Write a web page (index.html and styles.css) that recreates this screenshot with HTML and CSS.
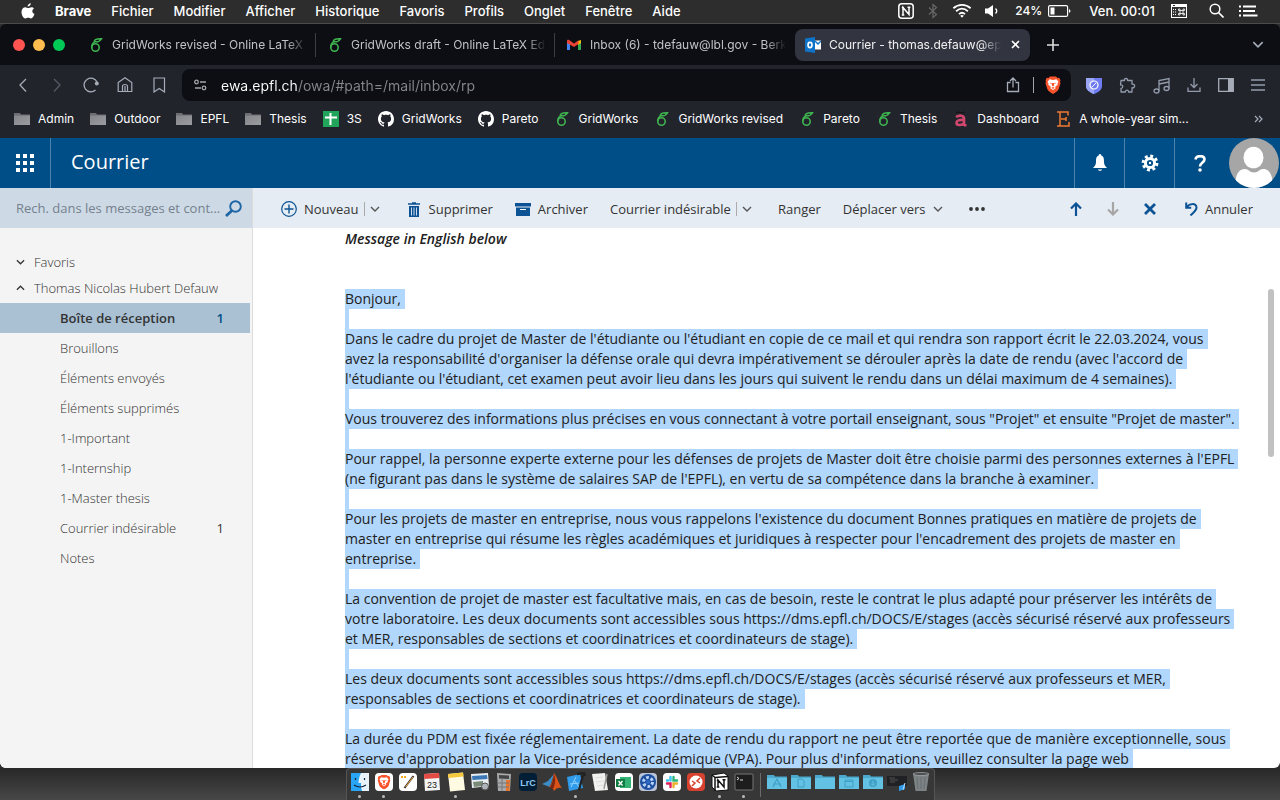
FILE: index.html
```html
<!DOCTYPE html>
<html lang="fr">
<head>
<meta charset="utf-8">
<title>Courrier - thomas.defauw@epfl.ch</title>
<link rel="stylesheet" href="styles.css">
</head>
<body>
<svg class="defs" aria-hidden="true">
  <symbol id="leaf" viewBox="0 0 16 16"><circle cx="7.500" cy="10.500" r="3.700" fill="none" stroke="#3eb34f" stroke-width="1.600"/><path d="M3.800 10.500C3.500 6.500 5.500 5 8.500 4.500M6 4.500C7 2 10 1.500 13.500 1.800 12 4 10 5 7.500 4.800" fill="none" stroke="#3eb34f" stroke-width="1.500"/></symbol>
  <symbol id="folder" viewBox="0 0 16 16"><path d="M0 2h6l1 1.500h9V14H0z" fill="#6c6d72"/><path d="M0 4.500h16V14H0z" fill="url(#fg)"/></symbol>
  <linearGradient id="fg" x1="0" x2="1" y1="0" y2="1"><stop stop-color="#85868b"/><stop offset="1" stop-color="#9b9ca0"/></linearGradient>
  <symbol id="github" viewBox="0 0 16 16"><path fill="#fff" d="M8 0C3.580 0 0 3.580 0 8c0 3.540 2.290 6.530 5.470 7.590.4.070.55-.17.55-.38 0-.19-.01-.82-.01-1.490-2.010.37-2.530-.49-2.690-.94-.09-.23-.48-.94-.82-1.130-.28-.15-.68-.52-.01-.53.63-.01 1.080.58 1.230.82.72 1.210 1.870.87 2.330.66.070-.52.280-.87.510-1.070-1.780-.2-3.640-.89-3.640-3.950 0-.87.310-1.590.820-2.150-.08-.2-.36-1.020.080-2.120 0 0 .67-.21 2.200.820.640-.18 1.320-.27 2-.27s1.360.09 2 .27c1.530-1.040 2.200-.82 2.200-.82.440 1.100.160 1.920.080 2.120.510.560.820 1.270.820 2.150 0 3.070-1.870 3.750-3.650 3.950.290.250.540.730.540 1.480 0 1.070-.01 1.930-.01 2.200 0 .210.150.460.550.380A8.010 8.010 0 0 0 16 8c0-4.420-3.580-8-8-8"/></symbol>
  <symbol id="chev" viewBox="0 0 10 6"><path d="M1 1l4 4 4-4" fill="none" stroke="currentColor" stroke-width="1.400"/></symbol>
  <symbol id="brave" viewBox="0 0 16 18"><path fill="#f9542b" d="M5 .5h6l1.500 1.400 1.700-.1 1.300 2.400-.5 1.500.5 1.500-2 6.300c-.5 1.500-2.500 2.500-5.500 4.500-3-2-5-3-5.500-4.500L.5 7.200 1 5.700.5 4.200l1.300-2.400 1.700.1z"/><path fill="#fff" d="M8 4l3.500-.8L13.500 6l-1 1.200.2 1.500-2.500 2 .4 1.500L8 14l-2.600-1.800.4-1.500-2.500-2 .2-1.500L2.500 6l2-2.800z"/><path d="M4.500 6.500l2.300.7-.5 1zM11.500 6.500l-2.300.7.5 1zM7 7h2l.2 2.500L8 10.500l-1.200-1zM6.300 11.800L8 11l1.700.8L8 13z" fill="#f9542b"/></symbol>
</svg>

<nav class="menubar" aria-label="Barre des menus">
  <svg class="apple" viewBox="0 0 14 16"><path fill="#fff" d="M9.800.2c.1 1.700-1.500 3.500-3.200 3.400C6.400 2 8.100.3 9.800.2zM12.900 5.500c-2.300 1.500-1.900 4.500.6 5.500-.7 2-2 4.500-3.500 4.500-1.100 0-1.500-.7-2.800-.7s-1.700.7-2.800.7C2.500 15.500.5 12 .5 9c0-3 1.900-4.700 3.800-4.700 1.200 0 2.200.8 2.900.8.700 0 1.900-.9 3.300-.9 1 0 1.900.5 2.400 1.300z"/></svg>
  <button class="app">Brave</button><button>Fichier</button><button>Modifier</button><button>Afficher</button><button>Historique</button><button>Favoris</button><button>Profils</button><button>Onglet</button><button>Fenêtre</button><button>Aide</button>
  <div class="status">
    <svg width="16" height="16" viewBox="0 0 16 16"><rect x=".8" y=".8" width="14.400" height="14.400" rx="3" fill="none" stroke="#fff" stroke-width="1.500"/><path d="M5 12V4.500l6 7V4M3.800 4.500H6M3.800 12h2.500M9.500 4.200h2.800" fill="none" stroke="#fff" stroke-width="1.500"/></svg>
    <svg width="12" height="16" viewBox="0 0 12 16"><path d="M2 4.500l7.500 7L6 14.500v-13l3.500 3L2 11.500" fill="none" stroke="#686868" stroke-width="1.200"/></svg>
    <svg width="20" height="15" viewBox="0 0 22 16"><g fill="none" stroke="#fff" stroke-width="2"><path d="M1.500 5.500c5.500-5 13.500-5 19 0M4.500 8.800c4-3.500 9-3.500 13 0M7.700 12c2-1.800 4.600-1.800 6.600 0"/></g><path d="M11 16l-2-2.200c1.200-1 2.800-1 4 0z" fill="#fff"/></svg>
    <svg width="14" height="14" viewBox="0 0 14 14"><path d="M0 4.500h3L8 1v12L3 9.500H0z" fill="#fff"/><path d="M10.500 4.500c1.500 1.500 1.500 3.500 0 5" fill="none" stroke="#fff" stroke-width="1.300"/></svg>
    <span class="charge">24% <svg width="23" height="12" viewBox="0 0 23 12"><rect x=".6" y=".6" width="19" height="10.800" rx="1.500" fill="none" stroke="#fff" stroke-width="1.200"/><path d="M2.500 2.500h4v7h-4zM21 4c2 1 2 3 0 4z" fill="#fff"/></svg></span>
    <span class="clock">Ven. 00:01</span>
    <svg width="16" height="14" viewBox="0 0 16 14"><path d="M0 0h16v14H0z" fill="#fff"/><path d="M1 3h14v10H1z" fill="#333"/><path d="M2 1.500h2" stroke="#333"/><path d="M2 5.500h3M2 8h3M2 10.500h3" stroke="#fff" stroke-dasharray="1 1"/><path d="M9 6.500h3v3H9zM9 6.500H7.500V5H9zM12 6.500h1.500V5H12zM9 9.500H7.500V11H9zM12 9.500h1.500V11H12z" fill="none" stroke="#fff" stroke-width=".8"/></svg>
    <svg width="15" height="15" viewBox="0 0 15 15"><circle cx="6" cy="6" r="4.800" fill="none" stroke="#fff" stroke-width="1.500"/><path d="M9.500 9.500l5 5" stroke="#fff" stroke-width="1.700"/></svg>
    <svg width="19" height="12" viewBox="0 0 19 12"><path d="M0 1.500h2M4 1.500h13M0 6h2M4 6h12M0 10.500h2M4 10.500h14.500" stroke="#fff" stroke-width="2"/></svg>
  </div>
</nav>

<div class="window">
  <div class="tabs">
    <div class="lights"><i></i><i></i><i></i></div>
    <button class="tab"><svg width="16" height="16"><use href="#leaf"/></svg><span class="fade">GridWorks revised - Online LaTeX Editor</span></button>
    <button class="tab"><svg width="16" height="16"><use href="#leaf"/></svg><span class="fade">GridWorks draft - Online LaTeX Editor</span></button>
    <button class="tab last"><svg width="16" height="16" viewBox="0 0 16 16"><path d="M1 5v8h3V7z" fill="#4285f4"/><path d="M15 5v8h-3V7z" fill="#34a853"/><path d="M12 4l3-1v3l-3 2z" fill="#fbbc04"/><path d="M1 6V4c0-1.500 1.500-1.500 2.500-.8L8 6.500l4.500-3.300V7L8 10z" fill="#ea4335"/></svg><span class="fade">Inbox (6) - tdefauw@lbl.gov - Berkeley Lab</span></button>
    <button class="tab active"><svg width="16" height="16" viewBox="0 0 16 16"><path d="M0 1.500L10 0v16L0 14.500z" fill="#0f74c8"/><path d="M10 3.500h6v9h-6z" fill="#fff"/><path d="M10 4l3 3 3-3" fill="none" stroke="#0f74c8" stroke-width="1.500"/><ellipse cx="5" cy="8" rx="2" ry="2.600" fill="none" stroke="#fff" stroke-width="1.600"/></svg><span class="fade">Courrier - thomas.defauw@epfl.ch</span><svg class="close" width="9" height="9" viewBox="0 0 9 9"><path d="M1 1l7 7M8 1L1 8" stroke="#fff" stroke-width="1.600"/></svg></button>
    <button class="plus" aria-label="Nouvel onglet"><svg width="12" height="12" viewBox="0 0 12 12"><path d="M6 0v12M0 6h12" stroke="#ddd" stroke-width="1.600"/></svg></button>
    <button class="more" aria-label="Onglets"><svg width="12" height="7"><use href="#chev"/></svg></button>
  </div>

  <div class="toolbar">
    <div class="navs">
      <button aria-label="Retour"><svg width="16" height="16" viewBox="0 0 16 16"><path d="M11 2L5 8l6 6.500" fill="none" stroke="#a5acb8" stroke-width="1.300"/></svg></button>
      <button aria-label="Avancer"><svg width="16" height="16" viewBox="0 0 16 16"><path d="M5 2l6 6-6 6.500" fill="none" stroke="#555b66" stroke-width="1.300"/></svg></button>
      <button aria-label="Recharger"><svg width="16" height="16" viewBox="0 0 16 16"><path d="M12.500 13A6.800 6.800 0 1 1 14 5" fill="none" stroke="#a5acb8" stroke-width="1.300"/><circle cx="13.800" cy="6.500" r="2" fill="#a5acb8"/></svg></button>
      <button aria-label="Accueil"><svg width="16" height="16" viewBox="0 0 16 16"><path d="M1.200 5.500L8 .8l6.800 4.700v9H1.200zM5.500 14.500V9.500C5.500 6.800 10.500 6.800 10.500 9.500v5M8 9v5.500" fill="none" stroke="#a5acb8" stroke-width="1.200"/></svg></button>
      <button aria-label="Favori"><svg width="16" height="16" viewBox="0 0 16 16"><path d="M3 1h10.500v14L8.200 11.500 3 15z" fill="none" stroke="#a5acb8" stroke-width="1.200"/></svg></button>
    </div>
    <div class="address">
      <svg width="13" height="12" viewBox="0 0 13 12"><g fill="none" stroke="#a3a5a9" stroke-width="1.300"><circle cx="2.500" cy="3" r="1.800"/><path d="M6 3h6M1 9h6"/><circle cx="10" cy="9" r="1.800"/></g></svg>
      <input class="url" aria-label="Adresse" value="ewa.epfl.ch/owa/#path=/mail/inbox/rp">
      <svg width="14" height="16" viewBox="0 0 14 16"><path d="M4.500 5.500H1.500v9h11v-9h-3M7 10.500V1.200M4 4l3-3 3 3" fill="none" stroke="#a5acb8" stroke-width="1.300"/></svg>
      <i class="bar"></i>
      <svg width="16" height="18"><use href="#brave"/></svg>
    </div>
    <div class="tools">
      <svg width="16" height="17" viewBox="0 0 16 17"><path d="M0 1h16v8c0 4-4 6.500-8 8-4-1.500-8-4-8-8z" fill="#6f7df0"/><path d="M0 1h8v16C4 15.500 0 13 0 9z" fill="#9ba5f5"/><circle cx="8" cy="8" r="4" fill="#6f7df0" stroke="#fff" stroke-width="1.200"/><path d="M5.500 10.500l5-5" stroke="#fff"/></svg>
      <svg width="17" height="17" viewBox="0 0 17 17"><path d="M2 3.500h3.500C4.500.8 9.500.8 8.500 3.500H13v3.700c3.500-.8 3.500 4.300 0 3.500V15H9.500c.5-2.500-3.500-2.500-3 0H2v-3.500c2.500-.5 2.500-4-.5-3.500z" fill="none" stroke="#929bab" stroke-width="1.300" stroke-linejoin="round"/></svg>
      <svg width="17" height="17" viewBox="0 0 17 17"><g fill="none" stroke="#929bab" stroke-width="1.300"><ellipse cx="3.500" cy="14" rx="2.500" ry="2"/><ellipse cx="13.500" cy="11.500" rx="2.500" ry="2"/><path d="M6 14V3.500L16 1.500v10M6 7l10-2"/></g></svg>
      <svg width="14" height="14" viewBox="0 0 14 14"><path d="M7 0v9M3.500 6L7 9.500 10.500 6M1 9.500v3.800h12V9.500" fill="none" stroke="#929bab" stroke-width="1.300"/></svg>
      <svg width="16" height="14" viewBox="0 0 16 14"><path d="M.7.7h14.600v12.600H.7z" fill="none" stroke="#a5acb8" stroke-width="1.300"/><path d="M10 1h5v12h-5z" fill="#a5acb8"/></svg>
      <svg width="14" height="12" viewBox="0 0 14 12"><path d="M0 1h14M0 6h14M0 11h14" stroke="#929bab" stroke-width="1.300"/></svg>
    </div>
  </div>

  <div class="bookmarks">
    <a href="#"><svg><use href="#folder"/></svg>Admin</a>
    <a href="#"><svg><use href="#folder"/></svg>Outdoor</a>
    <a href="#"><svg><use href="#folder"/></svg>EPFL</a>
    <a href="#"><svg><use href="#folder"/></svg>Thesis</a>
    <a href="#"><svg viewBox="0 0 16 16"><path d="M0 0h16v16H0z" fill="#20a55b"/><path d="M2 6.500h12M7.500 2v12" stroke="#fff" stroke-width="2"/></svg>3S</a>
    <a href="#"><svg><use href="#github"/></svg>GridWorks</a>
    <a href="#"><svg><use href="#github"/></svg>Pareto</a>
    <a href="#"><svg><use href="#leaf"/></svg>GridWorks</a>
    <a href="#"><svg><use href="#leaf"/></svg>GridWorks revised</a>
    <a href="#"><svg><use href="#leaf"/></svg>Pareto</a>
    <a href="#"><svg><use href="#leaf"/></svg>Thesis</a>
    <a href="#"><svg viewBox="0 0 16 16"><path d="M3 6c3-2 8-2 8 1.500V15M11 9C6 8.500 3.500 9.500 3.500 12s5 3 7.500 0M11 14.200h2.500" fill="none" stroke="#d3476f" stroke-width="2.600"/><path d="M3 1.500q2-1 4 0t5-.5" fill="none" stroke="#111"/></svg>Dashboard</a>
    <a href="#"><svg viewBox="0 0 16 16"><path d="M2 1h11v3.500M2 15h12v-4M5 1v14M6 8h5M11 6v4" fill="none" stroke="#ee7a30" stroke-width="1.500"/></svg>A whole-year sim...</a>
    <button aria-label="Autres favoris"><svg viewBox="0 0 10 8"><path d="M1 1l3 3-3 3M5 1l3 3-3 3" fill="none" stroke="#a5acb8" stroke-width="1.200"/></svg></button>
  </div>

  <header class="owa">
    <button class="cell waffle" aria-label="Applications"><svg width="18" height="18" viewBox="0 0 18 18"><path d="M0 2h18M0 9h18M0 16h18" stroke="#fff" stroke-width="4" stroke-dasharray="4 3"/></svg></button>
    <h1>Courrier</h1>
    <button class="cell" aria-label="Notifications"><svg width="14" height="18" viewBox="0 0 14 18"><path d="M7 0c1 0 1.300 1 1.300 1.500C11 2.500 11 5 11 8c0 3 1.500 4.500 3 6H0c1.500-1.500 3-3 3-6 0-3 0-5.500 2.700-6.500C5.700 1 6 0 7 0z" fill="#fff"/><path d="M5 15.200h4c0 2.500-4 2.500-4 0z" fill="#bcd"/></svg></button>
    <button class="cell" aria-label="Paramètres"><svg width="18" height="18" viewBox="0 0 18 18"><circle cx="9" cy="9" r="6.900" fill="none" stroke="#fff" stroke-width="3" stroke-dasharray="2.900 2.519"/><circle cx="9" cy="9" r="4.600" fill="none" stroke="#fff" stroke-width="3"/><circle cx="9" cy="9" r="1.200" fill="#fff"/></svg></button>
    <button class="cell" aria-label="Aide"><svg width="12" height="17" viewBox="0 0 12 17"><path d="M1.500 4.500C2 0 10.500 0 10.500 4.500 10.500 7.500 6 7.500 6 11.500" fill="none" stroke="#fff" stroke-width="2.600"/><circle cx="6" cy="15" r="1.800" fill="#fff"/></svg></button>
    <button class="avatar" aria-label="Compte"><svg width="50" height="50" viewBox="0 0 50 50"><clipPath id="ac"><circle cx="25" cy="25" r="25"/></clipPath><g clip-path="url(#ac)"><path d="M0 0h50v50H0z" fill="#a6a6a6"/><path d="M6 50c0-14 4-19 10-19 3 0 5 3.500 9 3.500s6-3.500 9-3.500c6 0 10 5 10 19z" fill="#fff"/><ellipse cx="24.500" cy="19.500" rx="10" ry="10.800" fill="#fff"/></g></svg></button>
  </header>

  <div class="mail">
    <aside>
      <label class="search"><input type="text" aria-label="Rechercher" placeholder="Rech. dans les messages et cont..."><svg width="17" height="17" viewBox="0 0 17 17"><circle cx="10.500" cy="6.500" r="5.300" fill="none" stroke="#1d65a5" stroke-width="1.900"/><path d="M7 10.500l-6 5.500" stroke="#1d65a5" stroke-width="2.800"/></svg></label>
      <nav class="folders">
        <button class="group"><svg><use href="#chev"/></svg><span>Favoris</span></button>
        <button class="group"><svg class="up"><use href="#chev"/></svg><span>Thomas Nicolas Hubert Defauw</span></button>
        <a class="on" href="#">Boîte de réception<b>1</b></a>
        <a href="#">Brouillons</a>
        <a href="#">Éléments envoyés</a>
        <a href="#">Éléments supprimés</a>
        <a href="#">1-Important</a>
        <a href="#">1-Internship</a>
        <a href="#">1-Master thesis</a>
        <a href="#">Courrier indésirable<b>1</b></a>
        <a href="#">Notes</a>
      </nav>
    </aside>
    <main>
      <div class="commands">
        <button><svg width="16" height="16" viewBox="0 0 16 16"><circle cx="8" cy="8" r="7.300" fill="none" stroke="#0b5394" stroke-width="1.200"/><path d="M8 3.500v9M3.500 8h9" stroke="#0b5394" stroke-width="1.400"/></svg>Nouveau<span class="split"><svg width="10" height="6"><use href="#chev"/></svg></span></button>
        <button><svg width="16" height="15" viewBox="0 0 12 15"><path d="M0 2h12M4 1h4" stroke="#0b5394" stroke-width="1.600"/><path d="M1 4h10v11H1z" fill="#0b5394"/><path d="M3.500 5.500v8M6 5.500v8M8.500 5.500v8" stroke="#e6ecf3" stroke-width=".9"/></svg>Supprimer</button>
        <button><svg width="16" height="13" viewBox="0 0 16 13"><path d="M0 0h16v3.500H0zM1 4.500h14V13H1z" fill="#0b5394"/><path d="M5 6.500h6" stroke="#fff" stroke-width="1.200"/></svg>Archiver</button>
        <button>Courrier indésirable<span class="split"><svg width="10" height="6"><use href="#chev"/></svg></span></button>
        <button>Ranger</button>
        <button>Déplacer vers<svg class="drop" width="10" height="6"><use href="#chev"/></svg></button>
        <button aria-label="Plus"><svg width="16" height="4" viewBox="0 0 16 4"><circle cx="2" cy="2" r="1.900" fill="#333"/><circle cx="8" cy="2" r="1.900" fill="#333"/><circle cx="14" cy="2" r="1.900" fill="#333"/></svg></button>
        <div class="right">
          <button aria-label="Précédent"><svg width="12" height="14" viewBox="0 0 12 14"><path d="M6 14V2M1 6.500l5-5 5 5" fill="none" stroke="#0b5394" stroke-width="2.200"/></svg></button>
          <button aria-label="Suivant"><svg width="12" height="14" viewBox="0 0 12 14"><path d="M6 0v12M1 7.500l5 5 5-5" fill="none" stroke="#a6a6a6" stroke-width="2.200"/></svg></button>
          <button aria-label="Fermer"><svg width="12" height="12" viewBox="0 0 12 12"><path d="M1 1l10 10M11 1L1 11" stroke="#0b5394" stroke-width="2.800"/></svg></button>
          <button class="undo"><svg width="13" height="14" viewBox="0 0 13 14"><path d="M1.200.5v5.300h5M1.500 5.500C4 1.500 11.500.5 11.500 5.500c0 3-3 5-6 8" fill="none" stroke="#0b5394" stroke-width="2"/></svg>Annuler</button>
        </div>
      </div>
      <article>
        <p class="intro">Message in English below</p>
        <div class="selected">
          <p><span>Bonjour,</span></p>
          <p><span>Dans le cadre du projet de Master de l'étudiante ou l'étudiant en copie de ce mail et qui rendra son rapport écrit le 22.03.2024, vous</span><span>avez la responsabilité d'organiser la défense orale qui devra impérativement se dérouler après la date de rendu (avec l'accord de</span><span>l'étudiante ou l'étudiant, cet examen peut avoir lieu dans les jours qui suivent le rendu dans un délai maximum de 4 semaines).</span></p>
          <p><span>Vous trouverez des informations plus précises en vous connectant à votre portail enseignant, sous "Projet" et ensuite "Projet de master".</span></p>
          <p><span>Pour rappel, la personne experte externe pour les défenses de projets de Master doit être choisie parmi des personnes externes à l'EPFL</span><span>(ne figurant pas dans le système de salaires SAP de l'EPFL), en vertu de sa compétence dans la branche à examiner.</span></p>
          <p><span>Pour les projets de master en entreprise, nous vous rappelons l'existence du document Bonnes pratiques en matière de projets de</span><span>master en entreprise qui résume les règles académiques et juridiques à respecter pour l'encadrement des projets de master en</span><span>entreprise.</span></p>
          <p><span>La convention de projet de master est facultative mais, en cas de besoin, reste le contrat le plus adapté pour préserver les intérêts de</span><span>votre laboratoire. Les deux documents sont accessibles sous https://dms.epfl.ch/DOCS/E/stages (accès sécurisé réservé aux professeurs</span><span>et MER, responsables de sections et coordinatrices et coordinateurs de stage).</span></p>
          <p><span>Les deux documents sont accessibles sous https://dms.epfl.ch/DOCS/E/stages (accès sécurisé réservé aux professeurs et MER,</span><span>responsables de sections et coordinatrices et coordinateurs de stage).</span></p>
          <p><span>La durée du PDM est fixée réglementairement. La date de rendu du rapport ne peut être reportée que de manière exceptionnelle, sous</span><span>réserve d'approbation par la Vice-présidence académique (VPA). Pour plus d'informations, veuillez consulter la page web</span></p>
        </div>
        <i class="thumb"></i>
      </article>
    </main>
  </div>
</div>

<footer class="desktop">
  <div class="dock">
    <i class="run"><svg viewBox="0 0 20 20"><path d="M1 1h18v18H1z" fill="#e8f2fb"/><path d="M1 1h10c-2 4-2.500 7-2.500 10H11c0 3 .3 6 1 8H1z" fill="#2aa5f5"/><path d="M5.500 6v2M14.500 6v2M4 13q6 4 12 0" fill="none" stroke="#123" stroke-width="1.200"/></svg></i>
    <i class="run"><svg viewBox="0 0 20 20"><rect x="1" y="1" width="18" height="18" rx="4" fill="#fff"/><use href="#brave" x="3" y="2.500" width="14" height="15"/></svg></i>
    <i><svg viewBox="0 0 20 20"><rect x="1" y="1" width="18" height="18" rx="4" fill="#fff"/><path d="M3 5h2M6 5h2" stroke="#f5a623" stroke-width="2"/><path d="M15.500 4l-9 12" stroke="#333" stroke-width="2"/><path d="M15 5l-7.500 10" stroke="#f2a33a"/></svg></i>
    <i><svg viewBox="0 0 20 20"><path d="M2 2l15-1 1 17-15 1z" fill="#f4f4f4"/><path d="M2 2l15-1 .3 5L2.300 7z" fill="#e34a43"/><text x="10" y="16" class="day">23</text></svg></i>
    <i class="run"><svg viewBox="0 0 20 20"><path d="M2 2l15-1.500L19 18 4 19.500z" fill="#fffbe3"/><path d="M2 2l15-1.500.5 4L2.500 6z" fill="#f5c93c"/></svg></i>
    <i><svg viewBox="0 0 20 20"><path d="M1 2l17-1 1 13-17 2z" fill="#e8edf2"/><path d="M2 4l15-1 .5 4L2.500 8z" fill="#3c78b5"/><path d="M3 10l10-1v5l-9 1z" fill="#7a8a78"/><circle cx="15" cy="14.500" r="3.500" fill="#aeb4ba" stroke="#555"/></svg></i>
    <i><svg viewBox="0 0 20 20"><path d="M3 1l14 1-1 17H4z" fill="#a7a9aa"/><path d="M5 3l10 .5V7L5 6.500z" fill="#444"/><path d="M12 8h4l-.5 11H12z" fill="#eb7428"/><path d="M4 11h11M4 15h11M8 7v12" stroke="#777"/></svg></i>
    <i><svg viewBox="0 0 20 20"><rect x="1" y="1" width="18" height="18" rx="4" fill="#001e36"/><text x="10" y="14" class="lrc">LrC</text></svg></i>
    <i><svg viewBox="0 0 20 20"><path d="M0 12l6-3 6-7-4 13-3-1z" fill="#3b8bc4"/><path d="M12 1c3 3 5 12 8 15-3-1-6 0-8 3-1-3-3-4-5-4 3-3 4-8 5-14z" fill="#d95319"/><path d="M12 2c-.5 6-2 10-4 13l3 2c2-4 3-9 1-15z" fill="#7e2610"/></svg></i>
    <i class="run"><svg viewBox="0 0 20 20"><path d="M1 5l13-3 3 14-14 3z" fill="#2f9bea"/><path d="M5 15l5-10M4 12l9-1M8 8l5 7" stroke="#8ed0ff"/><path d="M17 3L13 18" stroke="#222" stroke-width="2.200"/><path d="M11 2l7-1 1 3" fill="none" stroke="#222" stroke-width="2.500"/></svg></i>
    <i><svg viewBox="0 0 20 20"><path d="M2 2l13-1 3 17-13 1z" fill="#f1f1ef"/><path d="M5 6l8-1M6 10l8-1M7 14l7-1" stroke="#ddd"/><path d="M17 2l-3 15" stroke="#999" stroke-width="1.500"/></svg></i>
    <i><svg viewBox="0 0 20 20"><rect x="1" y="1" width="18" height="18" rx="4" fill="#fff"/><path d="M6 5h11v11H6z" fill="#33b474"/><path d="M2 7h9v8H2z" fill="#107c41"/><path d="M4.500 9l4 4.500M8.500 9l-4 4.500" stroke="#fff" stroke-width="1.400"/></svg></i>
    <i><svg viewBox="0 0 20 20"><rect x="1" y="1" width="18" height="18" rx="4" fill="#b9c4d9"/><circle cx="10" cy="10" r="8" fill="#1d4fa1"/><circle cx="10" cy="10" r="4.500" fill="none" stroke="#b9d2f7" stroke-width="3" stroke-dasharray="2.700 2"/><circle cx="10" cy="10" r="2" fill="#2e6ac5"/></svg></i>
    <i><svg viewBox="0 0 20 20"><rect x="1" y="1" width="18" height="18" rx="4" fill="#fff"/><g stroke-width="2.400" stroke-linecap="round"><path d="M8.500 5v3.500M5 8.500h1" stroke="#36c5f0"/><path d="M15 8.500h-3.500V5" fill="none" stroke="#2eb67d"/><path d="M11.500 15v-3.500H15" fill="none" stroke="#ecb22e"/><path d="M5 11.500h3.500V15" fill="none" stroke="#e01e5a"/></g></svg></i>
    <i><svg viewBox="0 0 20 20"><rect x="1" y="1" width="18" height="18" rx="4" fill="#d8412f"/><circle cx="10" cy="10" r="6.500" fill="#fff"/><path d="M6 9l3 2-3 3M14 6l-3 3 3 2" fill="none" stroke="#d8412f" stroke-width="1.500"/></svg></i>
    <i class="run"><svg viewBox="0 0 20 20"><path d="M2 3l12-2 4 3v14L6 19l-4-4z" fill="#fff" stroke="#111"/><path d="M5 5.500l13-1M5 5.500V19M2 3l3 2.500M8 15V8l6 7V7.500M6.800 8.500H9M6.800 15h2.500M12.500 7.800h3" fill="none" stroke="#111" stroke-width="1.500"/></svg></i>
    <i class="run"><svg viewBox="0 0 20 20"><rect x="1" y="2" width="18" height="16" rx="1" fill="#1d1d1d" stroke="#777"/><path d="M3 5l2 1.500L3 8M6 8h3" fill="none" stroke="#ddd"/></svg></i>
    <i class="rule"></i>
    <i><svg viewBox="0 0 20 20"><use href="#dir"/><path d="M6 15l4-8 4 8M6 12h8" fill="none" stroke="#3f9fc4" stroke-width="1.200"/></svg></i>
    <i><svg viewBox="0 0 20 20"><use href="#dir"/><path d="M7 7h4l2 2v6H7z" fill="none" stroke="#3f9fc4"/></svg></i>
    <i><svg viewBox="0 0 20 20"><g id="dir"><path d="M0 3h7l1 1.500h12V17H0z" fill="#4ba9cd"/><path d="M0 6h20v11H0z" fill="#63c2e4"/></g></svg></i>
    <i><svg viewBox="0 0 20 20"><use href="#dir"/><path d="M6 8h8v7H6zM6 9.500h8" fill="none" stroke="#3f9fc4"/></svg></i>
    <i><svg viewBox="0 0 20 20"><use href="#dir"/><circle cx="10" cy="11" r="4" fill="#3f9fc4"/><path d="M10 8.500v5M8 11.500l2 2 2-2" fill="none" stroke="#63c2e4"/></svg></i>
    <i><svg viewBox="0 0 20 20"><path d="M0 4h20v10H0z" fill="#202124"/><path d="M2 6h6M3 8h8M3 10h5" stroke="#55504c"/><path d="M12 14l6-2v5l-6 2z" fill="#2f9bea"/><path d="M18 11l-2 7" stroke="#bcdcf5"/></svg></i>
    <i><svg viewBox="0 0 20 20"><path d="M2 1.500h16L15.500 19h-11z" fill="#7d8285"/><ellipse cx="10" cy="2" rx="8" ry="1.500" fill="#4b4e50" stroke="#a8acae" stroke-width=".7"/><path d="M6 5l1 12M10 5v12M14 5l-1 12" stroke="#696e71"/></svg></i>
  </div>
</footer>
</body>
</html>
```
FILE: styles.css
```css
* { box-sizing: border-box; }
html, body { height: 100%; }
body {
  margin: 0;
  display: flex;
  flex-direction: column;
  overflow: hidden;
  background: #2d2d2d;
  font-family: Inter, "Liberation Sans", sans-serif;
}
button, input { font: inherit; color: inherit; border: 0; padding: 0; margin: 0; background: none; }
button { display: flex; align-items: center; white-space: nowrap; }
a { color: inherit; text-decoration: none; }
p, h1 { margin: 0; }
svg { flex: none; display: block; }
.defs { position: absolute; width: 0; height: 0; }

.menubar {
  flex: none;
  display: flex;
  align-items: center;
  gap: 20px;
  height: 24px;
  padding: 0 22px 2px 21px;
  background: #2d2d2d;
  border-bottom: 1px solid #4b4b4b;
  color: #fff;
  font-size: 13px;
  font-weight: 500;
}
.apple { width: 14px; height: 16px; }
.app { font-weight: 700; }
.status { display: flex; align-items: center; gap: 13px; margin-left: auto; }
.charge { display: flex; align-items: center; gap: 4px; font-size: 12px; margin: 0 5px 0 3px; }
.status .clock { margin-right: 3px; }
.status svg:nth-last-child(2) { margin-left: 9px; }
.status svg:nth-last-child(1) { margin-left: 2px; }

.window {
  flex: 1;
  min-height: 0;
  display: flex;
  flex-direction: column;
  overflow: hidden;
  border-radius: 6px;
  background: #22242c;
}
.tabs { flex: none; display: flex; align-items: center; height: 41px; padding: 0 16px 0 13px; background: #0c0e13; color: #c0c2c5; font-size: 12px; }
.lights { display: flex; gap: 8px; width: 64px; }
.lights i { width: 12px; height: 12px; border-radius: 50%; background: #ff5450; }
.lights i:nth-child(2) { background: #ffbd4f; }
.lights i:nth-child(3) { background: #00ca56; }
.tab { flex: 0 1 239px; min-width: 0; height: 24px; padding: 0 8px 0 11px; gap: 8px; border-right: 1px solid #3c3e43; }
.tab.last { border-right: 0; }
.tab.active { flex-basis: 235px; height: 32px; margin-left: 1px; padding: 0 10px; border: 0; border-radius: 8px; background: #323540; color: #f1f1f1; }
.fade { flex: 1; overflow: hidden; text-align: left; mask-image: linear-gradient(90deg, #000 calc(100% - 20px), transparent); }
.close { margin-left: 2px; }
.plus { margin-left: 17px; }
.more { margin-left: auto; color: #a5acb8; }

.toolbar { flex: none; display: flex; align-items: center; height: 38px; padding: 2px 15px 0 15px; }
.navs { display: flex; gap: 18px; }
.address { flex: 1; display: flex; align-items: center; height: 32px; margin: 0 15px; padding: 0 10px 0 12px; border-radius: 8px; background: #0c0e13; }
.url {
  flex: 1;
  min-width: 0;
  margin-left: 14px;
  font-size: 14px;
  color: transparent;
  background: linear-gradient(90deg, #fff 76px, #85878a 76px);
  background-clip: text;
  -webkit-background-clip: text;
}
.bar { width: 1px; height: 16px; margin: 0 11px 0 13px; background: #a3a5a9; }
.tools { display: flex; align-items: center; gap: 17px; }

.bookmarks { flex: none; display: flex; align-items: center; gap: 16px; height: 35px; padding: 0 16px 4px 14px; color: #fff; font-size: 12px; }
.bookmarks a { display: flex; align-items: center; gap: 8px; white-space: nowrap; }
.bookmarks svg { width: 16px; height: 16px; }
.bookmarks button { margin-left: auto; }
.bookmarks button svg { width: 10px; height: 8px; }

.owa { flex: none; display: flex; height: 50px; background: #004e87; color: #fff; font-family: "Open Sans", "Noto Sans", sans-serif; }
.cell { width: 50px; justify-content: center; border-left: 1px solid #4d83ab; }
.waffle { width: 51px; border-left: 0; border-right: 1px solid #4d83ab; }
.owa h1 { flex: 1; padding-left: 20px; font-size: 20px; line-height: 48px; font-weight: 400; }
.avatar { width: 56px; padding-right: 1px; justify-content: flex-end; }

.mail { flex: 1; min-height: 0; display: flex; background: #fff; color: #333; font-family: "Open Sans", "Noto Sans", sans-serif; font-size: 13px; }
aside { flex: none; width: 253px; background: #f4f4f4; border-right: 1px solid #dcdcdc; }
.search { display: flex; align-items: center; height: 40px; padding: 0 10px 0 16px; background: #cddae6; }
.search input { flex: 1; min-width: 0; outline: 0; text-overflow: ellipsis; }
.search input::placeholder { color: #75818d; opacity: 1; }
.folders { padding: 21px 2px 0 0; color: #333; font-weight: 300; }
.group { height: 26px; gap: 9px; padding-left: 16px; width: 224px; color: #333; }
.group span { overflow: hidden; }
.group svg { width: 9px; height: 6px; }
.up { transform: rotate(180deg); }
.folders a { display: flex; align-items: center; justify-content: space-between; height: 30px; padding: 0 26px 0 60px; }
.folders b { font-weight: 400; }
.folders .on { margin-top: 2px; background: #a9c1d3; color: #333; font-weight: 600; }
.folders .on b { color: #004e87; font-weight: 600; }

main { flex: 1; min-width: 0; display: flex; flex-direction: column; }
.commands { flex: none; display: flex; align-items: center; gap: 22px; height: 40px; padding: 2px 27px 0 28px; background: #e6ecf3; }
.commands button { gap: 7px; height: 24px; }
.split { display: flex; align-items: center; height: 14px; margin-left: -2px; padding: 0 4px 0 5px; border-left: 1px solid #aaa; color: #555; }
.drop { margin-right: 4px; color: #555; }
.right { display: flex; align-items: center; gap: 25px; margin-left: auto; }
.right .undo { margin-left: 4px; }

article { position: relative; flex: 1; min-height: 0; overflow: hidden; padding: 1px 20px 0 92px; color: #212121; font-size: 14px; line-height: 20px; }
.intro { margin-bottom: 40px; font-style: italic; font-weight: 600; }
.selected span { display: block; width: fit-content; padding-right: 4px; background: #b1d7fc; white-space: nowrap; }
.selected p::after { content: ""; display: block; width: 4px; height: 20px; background: #b1d7fc; }
.thumb { position: absolute; top: 61px; right: 6px; width: 6px; height: 168px; border-radius: 3px; background: #c1c1c1; }

.desktop { flex: none; display: flex; justify-content: center; height: 32px; background: linear-gradient(#282828, #474747); }
.dock { display: flex; height: 32px; padding: 0 1px; background: #373737; border: 1px solid #555; border-bottom: 0; border-radius: 4px 4px 0 0; }
.dock i { display: flex; flex-direction: column; align-items: center; gap: 3px; width: 24px; padding-top: 3px; }
.dock svg { width: 20px; height: 20px; }
.dock .run::after { content: ""; width: 3px; height: 3px; border-radius: 50%; background: #bbb; }
.dock .rule { width: 1px; height: 24px; margin: 4px 4px 0; padding: 0; background: #6b6b6b; }
.day { font: 9px "Liberation Sans", sans-serif; fill: #222; text-anchor: middle; }
.lrc { font: 700 9px "Liberation Sans", sans-serif; fill: #8fc8f5; text-anchor: middle; }
```
